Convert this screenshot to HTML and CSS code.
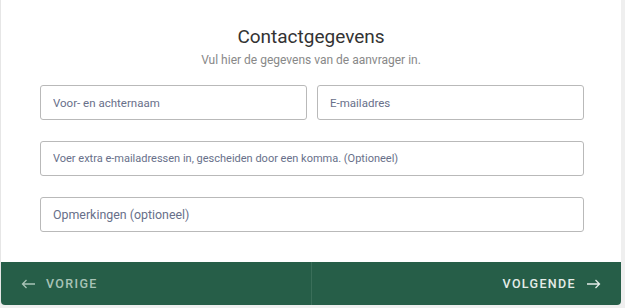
FILE: index.html
```html
<!DOCTYPE html>
<html>

<head>
    <title>Contactgegevens</title>
    <link rel="stylesheet" href="styles.css">
</head>

<body>
    <div class="card">
        <div class="header">
            <h2 class="title">Contactgegevens</h2>
            <p class="subtitle">Vul hier de gegevens van de aanvrager in.</p>
        </div>
        <form class="form">
            <div class="row two">
                <input type="text" class="field" placeholder="Voor- en achternaam" />
                <input type="email" class="field" placeholder="E-mailadres" />
            </div>
            <div class="row">
                <input type="text" class="field small" placeholder="Voer extra e-mailadressen in, gescheiden door een komma. (Optioneel)" />
            </div>
            <div class="row">
                <input type="text" class="field large" placeholder="Opmerkingen (optioneel)" />
            </div>
        </form>
        <div class="footer">
            <button class="nav prev">
                <svg class="arrow" width="15" height="10" viewBox="0 0 15 10"><path d="M14 5H1.5M5.5 1L1.5 5L5.5 9" fill="none" stroke="currentColor" stroke-width="1.3"/></svg>
                VORIGE
            </button>
            <button class="nav next">
                VOLGENDE
                <svg class="arrow" width="15" height="10" viewBox="0 0 15 10"><path d="M1 5H13.5M9.5 1L13.5 5L9.5 9" fill="none" stroke="currentColor" stroke-width="1.3"/></svg>
            </button>
        </div>
    </div>
</body>

</html>
```
FILE: styles.css
```css
* {
    box-sizing: border-box;
    font-family: Roboto, "Liberation Sans", sans-serif;
}

body {
    margin: 0;
    background: #efefef;
}

.card {
    width: 621px;
    height: 305px;
    background: #fff;
    border-radius: 0 0 4px 4px;
    border-left: 1px solid #e6e6e6;
    display: flex;
    flex-direction: column;
}

.header {
    text-align: center;
    padding-top: 25px;
}

.title {
    margin: 0;
    font-size: 19px;
    font-weight: 400;
    line-height: 24px;
    color: #333;
}

.subtitle {
    margin: 4px 0 0;
    font-size: 12px;
    color: #888;
}

.form {
    padding: 18px 37px 0 39px;
    flex: 1;
}

.row {
    display: flex;
    gap: 10px;
    margin-bottom: 21px;
}

.field {
    flex: 1;
    height: 35px;
    border: 1px solid #b9b9b9;
    border-radius: 3px;
    padding: 0 12px;
    font-size: 11.5px;
    color: #333;
}

.field.small {
    font-size: 11px;
}

.field.large {
    font-size: 12.4px;
}

.field::placeholder {
    color: #68708a;
}

.footer {
    display: flex;
    height: 43px;
    background: #265e48;
    border-radius: 0 0 4px 4px;
}

.nav {
    flex: 1;
    background: none;
    border: none;
    font-size: 12.5px;
    font-weight: 500;
    letter-spacing: 1.35px;
    padding: 0 20px;
    display: flex;
    align-items: center;
    gap: 10px;
}

.prev {
    color: #a8c3b6;
    border-right: 1px solid #3a6e59;
}

.next {
    color: #e4ece8;
    justify-content: flex-end;
}
```
